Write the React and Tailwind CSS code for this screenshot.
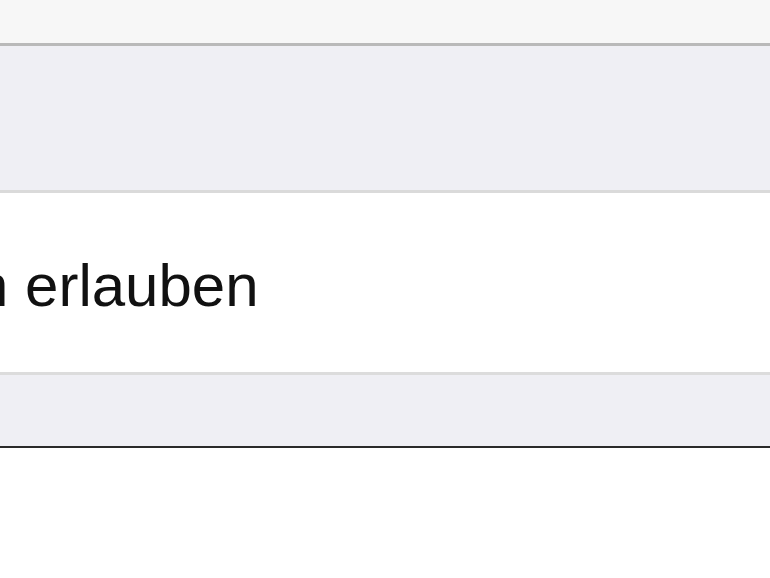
import React from 'react';

export default function App() {
    return (
        <div className="w-[770px] h-[578px] overflow-hidden bg-white" style={{ fontFamily: '"Liberation Sans", Arial, sans-serif' }}>
            {/* nav bar bottom */}
            <div className="h-[43px] bg-[#f7f7f7]" />
            <div className="h-[3px] bg-[#b9b9b9]" />

            {/* section header */}
            <div className="h-[144px] bg-[#efeff4]" />
            <div className="h-[3px] bg-[#dadada]" />

            {/* row */}
            <div className="h-[179px] bg-white flex items-center">
                <span className="ml-[-25px] mt-[6px] text-[60px] leading-none text-[#111] whitespace-nowrap">n erlauben</span>
            </div>
            <div className="h-[3px] bg-[#dcdcdc]" />

            {/* footer */}
            <div className="h-[71px] bg-[#efeff4]" />
            <div className="h-[2px] bg-[#2a2a2a]" />
            <div className="flex-1 bg-white" />
        </div>
    );
}
